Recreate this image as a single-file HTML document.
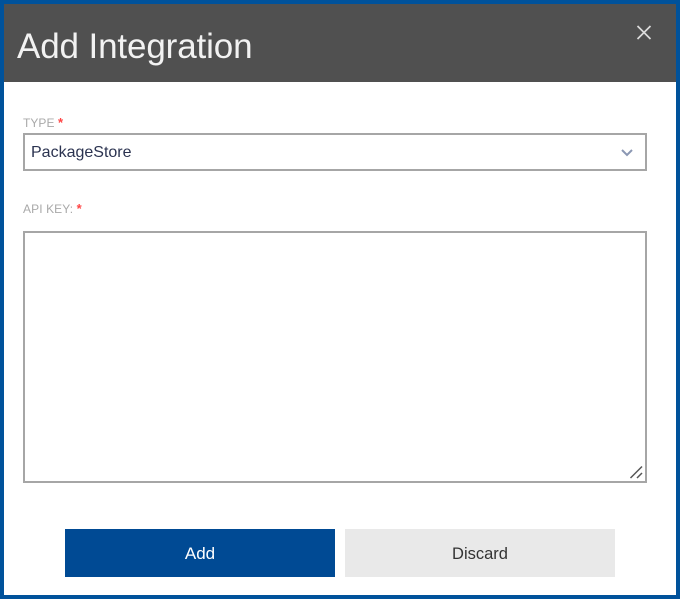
<!DOCTYPE html>
<html>
<head>
<meta charset="utf-8">
<style>
html,body{margin:0;padding:0;width:680px;height:599px;overflow:hidden;background:#fff;font-family:"Liberation Sans",sans-serif;}
.a{position:absolute;box-sizing:border-box;white-space:nowrap;}
</style>
</head>
<body>
<div class="a" style="left:0;top:0;width:680px;height:599px;border:4px solid #00529b;background:#fff;"></div>
<div class="a" style="left:4px;top:4px;width:672px;height:78px;background:#505050;"></div>
<div class="a" style="left:17px;top:26px;font-size:35px;line-height:42px;color:#f2f2f2;letter-spacing:-0.13px;">Add Integration</div>
<svg class="a" style="left:630px;top:18px;" width="28" height="28" viewBox="0 0 28 28"><path d="M7.5 8 L20.5 21 M20.5 8 L7.5 21" stroke="#dcdcdc" stroke-width="1.7" fill="none"/></svg>

<div class="a" style="left:23px;top:115px;font-size:12px;line-height:16px;color:#a9a9a9;letter-spacing:0.05px;">TYPE <span style="color:#f44;font-weight:bold;font-size:13px;">*</span></div>
<div class="a" style="left:23px;top:133px;width:624px;height:38px;border:2px solid #a6a6a6;background:#fff;"></div>
<div class="a" style="left:31px;top:143px;font-size:16px;line-height:20px;color:#2b3350;">PackageStore</div>
<svg class="a" style="left:620px;top:147px;" width="14" height="12" viewBox="0 0 14 12"><path d="M2 3 L7 8 L12 3" stroke="#8b97b3" stroke-width="2" fill="none"/></svg>

<div class="a" style="left:23px;top:201px;font-size:12px;line-height:16px;color:#a9a9a9;letter-spacing:0.1px;">API KEY: <span style="color:#f44;font-weight:bold;font-size:13px;">*</span></div>
<div class="a" style="left:23px;top:231px;width:624px;height:252px;border:2px solid #a6a6a6;background:#fff;"></div>
<svg class="a" style="left:628px;top:464px;" width="16" height="16" viewBox="0 0 16 16"><path d="M2.5 14 L14 2.5 M9 14 L14 9" stroke="#555" stroke-width="1.5" fill="none"/></svg>

<div class="a" style="left:65px;top:529px;width:270px;height:48px;background:#004a94;color:#fff;font-size:17px;line-height:50px;text-align:center;">Add</div>
<div class="a" style="left:345px;top:529px;width:270px;height:48px;background:#e9e9e9;color:#333;font-size:16.5px;line-height:50px;text-align:center;">Discard</div>
</body>
</html>
